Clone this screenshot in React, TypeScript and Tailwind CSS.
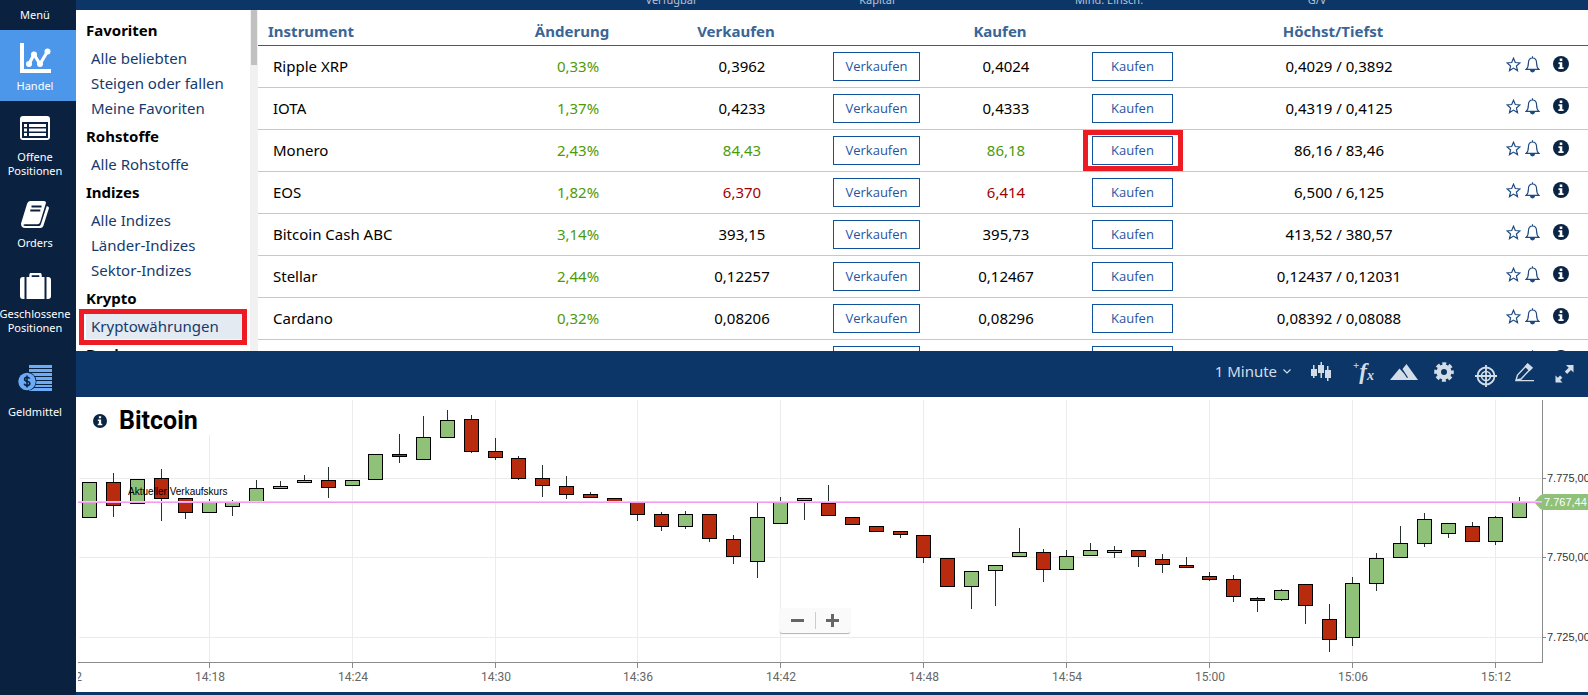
import type { ReactNode } from "react";

type Tone = "up" | "down" | "flat";

type Instrument = {
  name: string;
  change: string;
  sell: string;
  buy: string;
  range: string;
  tone: Tone;
  highlight?: boolean;
};

const INSTRUMENTS: Instrument[] = [
  { name: "Ripple XRP", change: "0,33%", sell: "0,3962", buy: "0,4024", range: "0,4029 / 0,3892", tone: "flat" },
  { name: "IOTA", change: "1,37%", sell: "0,4233", buy: "0,4333", range: "0,4319 / 0,4125", tone: "flat" },
  { name: "Monero", change: "2,43%", sell: "84,43", buy: "86,18", range: "86,16 / 83,46", tone: "up", highlight: true },
  { name: "EOS", change: "1,82%", sell: "6,370", buy: "6,414", range: "6,500 / 6,125", tone: "down" },
  { name: "Bitcoin Cash ABC", change: "3,14%", sell: "393,15", buy: "395,73", range: "413,52 / 380,57", tone: "flat" },
  { name: "Stellar", change: "2,44%", sell: "0,12257", buy: "0,12467", range: "0,12437 / 0,12031", tone: "flat" },
  { name: "Cardano", change: "0,32%", sell: "0,08206", buy: "0,08296", range: "0,08392 / 0,08088", tone: "flat" },
  { name: "", change: "", sell: "", buy: "", range: "", tone: "flat" },
];

const TONE_CLASS: Record<Tone, string> = {
  up: "text-[#4e9a06]",
  down: "text-[#a40000]",
  flat: "text-black",
};

const CATEGORIES: { title: string; items: string[] }[] = [
  { title: "Favoriten", items: ["Alle beliebten", "Steigen oder fallen", "Meine Favoriten"] },
  { title: "Rohstoffe", items: ["Alle Rohstoffe"] },
  { title: "Indizes", items: ["Alle Indizes", "Länder-Indizes", "Sektor-Indizes"] },
  { title: "Krypto", items: ["Kryptowährungen"] },
  { title: "Devisen", items: [] },
];

// [up, open/close top, open/close bottom, high, low]
const CANDLES: [number, number, number, number, number][] = [
  [1, 85, 121, 85, 121],
  [0, 85, 109, 76, 120],
  [1, 82, 107, 82, 107],
  [0, 81, 102, 72, 124],
  [0, 101, 116, 101, 122],
  [1, 104, 116, 102, 116],
  [1, 105, 110, 103, 119],
  [1, 91, 105, 83, 105],
  [1, 89, 92, 84, 92],
  [1, 83, 86, 78, 86],
  [0, 83, 91, 70, 101],
  [1, 83, 89, 83, 89],
  [1, 57, 83, 57, 83],
  [0, 57, 60, 37, 66],
  [1, 40, 63, 19, 63],
  [1, 23, 41, 13, 41],
  [0, 22, 55, 18, 56],
  [0, 54, 61, 41, 63],
  [0, 61, 82, 59, 83],
  [0, 81, 89, 68, 100],
  [0, 89, 98, 79, 102],
  [0, 97, 101, 95, 101],
  [0, 101, 105, 101, 105],
  [0, 105, 118, 105, 124],
  [0, 117, 130, 115, 134],
  [1, 117, 130, 114, 132],
  [0, 117, 142, 117, 145],
  [0, 142, 160, 138, 167],
  [1, 120, 165, 104, 181],
  [1, 104, 127, 100, 127],
  [1, 101, 104, 101, 123],
  [0, 106, 119, 88, 119],
  [0, 120, 128, 120, 128],
  [0, 129, 135, 129, 135],
  [0, 134, 138, 134, 141],
  [0, 138, 161, 138, 166],
  [0, 161, 190, 161, 190],
  [1, 174, 190, 174, 212],
  [1, 168, 174, 168, 209],
  [1, 155, 160, 131, 160],
  [0, 155, 173, 152, 185],
  [1, 159, 173, 153, 173],
  [1, 153, 159, 146, 159],
  [1, 153, 156, 149, 161],
  [0, 153, 160, 153, 170],
  [0, 162, 168, 157, 176],
  [0, 168, 171, 160, 171],
  [0, 179, 183, 175, 184],
  [0, 182, 200, 178, 205],
  [0, 201, 204, 200, 215],
  [1, 193, 203, 192, 204],
  [0, 187, 209, 187, 227],
  [0, 222, 243, 207, 255],
  [1, 186, 241, 180, 249],
  [1, 161, 187, 156, 194],
  [1, 146, 161, 129, 161],
  [1, 122, 147, 116, 150],
  [1, 126, 137, 126, 141],
  [0, 129, 145, 125, 145],
  [1, 120, 145, 119, 148],
  [1, 105, 121, 100, 121],
];

const TIMES = ["14:12", "14:18", "14:24", "14:30", "14:36", "14:42", "14:48", "14:54", "15:00", "15:06", "15:12"];

const PRICES = [
  { y: 81, label: "7.775,00" },
  { y: 160, label: "7.750,00" },
  { y: 240, label: "7.725,00" },
];

const candleLeft = (i: number) => Math.round(6.4 + i * 23.83);

function InfoIcon({ size }: { size: number }) {
  return (
    <svg width={size} height={size} viewBox="0 0 16 16" aria-hidden="true">
      <circle cx="8" cy="8" r="8" fill="#0a2445" />
      <path d="M6.7 2.6h2.6v2.3H6.7zM5.5 6.3h3.8v4.9h1.3v1.7H5.4v-1.7h1.3V8H5.5z" fill="#fff" />
    </svg>
  );
}

function StarIcon() {
  return (
    <svg width="15" height="15" viewBox="0 0 15 15" fill="none" stroke="#1f4a80" strokeWidth="1.2" aria-hidden="true">
      <path d="M7.5 1.2 9.3 5.5 14 5.9 10.4 9 11.5 13.6 7.5 11.1 3.5 13.6 4.6 9 1 5.9 5.7 5.5z" />
    </svg>
  );
}

function BellIcon() {
  return (
    <svg width="15" height="17" viewBox="0 0 15 17" fill="none" stroke="#1f4a80" strokeWidth="1.2" aria-hidden="true">
      <path d="M7.5 .3v1.5M1 13.4c1.7-1.3 2.4-2.6 2.4-6.2C3.4 4 5 2 7.5 2s4.1 2 4.1 5.2c0 3.6.7 4.9 2.4 6.2z" />
      <path d="M5.6 14h3.8a1.9 1.9 0 0 1-3.8 0z" fill="#1f4a80" />
    </svg>
  );
}

function TradeIcon() {
  return (
    <svg width="31" height="30" viewBox="0 0 31 30" fill="#fff" aria-hidden="true">
      <path d="M0 0h4v26h27v4H0z" />
      <path d="M9 21 14 11.5 20 21 27.5 8.5" fill="none" stroke="#fff" strokeWidth="3.2" />
      <circle cx="9" cy="21" r="3" />
      <circle cx="14" cy="11.5" r="3" />
      <circle cx="20" cy="21" r="3" />
      <circle cx="27.5" cy="8.5" r="3" />
    </svg>
  );
}

function ListIcon() {
  return (
    <svg width="30" height="24" viewBox="0 0 30 24" aria-hidden="true">
      <rect width="30" height="24" rx="3" fill="#fff" />
      <path d="M2 6h26v16H2z" fill="#0a2240" />
      <path d="M4 8h3v3H4zM9 8h17v3H9zM4 12.5h3v3H4zM9 12.5h17v3H9zM4 17h3v3H4zM9 17h17v3H9z" fill="#fff" />
    </svg>
  );
}

function BookIcon() {
  return (
    <svg width="28" height="27" viewBox="0 0 28 27" aria-hidden="true">
      <path d="M9.5 0H23q2.5 0 1.8 2.5L19 21.5q-.6 1.7-2.5 1.7H4q-1.8 0-1.5 1.1.2.8 1.8.8h13.5q1.5 0 2-1.5L25.8 5l1.5.8q.9.6.5 2L22.3 25q-.7 2-3 2H4.5Q0 27 0 22.5L6 3Q7 0 9.5 0z" fill="#fff" />
      <path d="M10.5 5.5h10M9.3 9.5h10" stroke="#0a2240" strokeWidth="1.8" />
    </svg>
  );
}

function SuitcaseIcon() {
  return (
    <svg width="31" height="26" viewBox="0 0 31 26" aria-hidden="true">
      <path d="M10.5 5V2q0-1 1-1h8q1 0 1 1v3" fill="none" stroke="#fff" strokeWidth="2.4" />
      <path d="M6.5 4h18v22h-18zM4.5 4v22H3q-3 0-3-3V7q0-3 3-3zM26.5 4v22H28q3 0 3-3V7q0-3-3-3z" fill="#fff" />
    </svg>
  );
}

function FundsIcon() {
  return (
    <svg width="34" height="26" viewBox="0 0 34 26" aria-hidden="true">
      <path d="M11 0h23v3H11zM11 4h23v3H11zM11 8h23v3H11zM11 12h23v3H11zM11 16h23v3H11zM11 20h23v2H11zM11 23h23v3H11z" fill="#6cabf5" />
      <circle cx="9" cy="16.5" r="9.5" fill="#0a2240" />
      <circle cx="9" cy="16.5" r="8.7" fill="#6cabf5" />
      <path d="M11.6 13.8q-.6-1.5-2.6-1.5-2.4 0-2.4 1.9 0 1.6 2.4 2.1 2.8.5 2.8 2.3 0 2-2.8 2-2.3 0-2.8-1.8M9 10.5v12" fill="none" stroke="#0a2240" strokeWidth="1.6" />
    </svg>
  );
}

function NavItem({ icon, lines, className }: { icon: ReactNode; lines: string[]; className: string }) {
  return (
    <button type="button" className={`flex w-full flex-col items-center pr-1.5 text-[11px] leading-[14px] text-white ${className}`}>
      {icon}
      {lines.map((line) => (
        <span key={line}>{line}</span>
      ))}
    </button>
  );
}

function Sidebar() {
  return (
    <nav className="flex w-[76px] shrink-0 flex-col bg-[#0a2240]">
      <button type="button" className="h-[30px] w-full pr-1.5 text-[11px] text-white">
        Menü
      </button>
      <NavItem icon={<TradeIcon />} lines={["Handel"]} className="h-[71px] bg-[#4d97ea] pt-[13px] [&>svg]:mb-1.5" />
      <NavItem icon={<ListIcon />} lines={["Offene", "Positionen"]} className="h-[84px] pt-[15px] [&>svg]:mb-2.5" />
      <NavItem icon={<BookIcon />} lines={["Orders"]} className="h-[72px] pt-4 [&>svg]:mb-2" />
      <NavItem icon={<SuitcaseIcon />} lines={["Geschlossene", "Positionen"]} className="h-[92px] pt-4 [&>svg]:mb-2" />
      <NavItem icon={<FundsIcon />} lines={["Geldmittel"]} className="h-[80px] pt-4 [&>svg]:mb-3.5" />
    </nav>
  );
}

function AccountBar() {
  return (
    <div className="flex h-[10px] items-end justify-end overflow-hidden bg-[#0c3668] pr-[193px] pb-0.5 text-center text-[11px] leading-[16px] text-[#b4c2d3]">
      <span className="w-[207px]">Verfügbar</span>
      <span className="w-[204px]">Kapital</span>
      <span className="w-[260px]">Mind. Einsch.</span>
      <span className="w-[156px]">G/V</span>
    </div>
  );
}

function Categories() {
  return (
    <aside className="flex w-[182px] shrink-0 bg-white">
      <div className="flex-1 pt-[5px] pr-2 pl-[10px]">
        {CATEGORIES.map((group) => (
          <section key={group.title}>
            <h2 className="h-[31px] text-[15px] leading-[31px] font-bold text-black">{group.title}</h2>
            <ul>
              {group.items.map((item) => {
                const active = item === "Kryptowährungen";
                return (
                  <li key={item} className="relative">
                    <a
                      href="#"
                      className={`block h-[25px] pl-[5px] text-[15px] leading-[24px] whitespace-nowrap text-[#163a6b] ${active ? "bg-[#e3eaf2]" : ""}`}
                    >
                      {item}
                    </a>
                    {active && (
                      <span className="pointer-events-none absolute -top-[5px] -right-[5px] -bottom-[6px] -left-[7px] border-5 border-[#ed1c24]" />
                    )}
                  </li>
                );
              })}
            </ul>
          </section>
        ))}
      </div>
      <div className="w-2 bg-[#f1f1f1] px-px">
        <div className="h-[55px] bg-[#c1c1c1]" />
      </div>
    </aside>
  );
}

function InstrumentTable() {
  return (
    <div className="min-w-0 flex-1 bg-white">
      <table className="w-full table-fixed border-collapse text-center text-[15px]">
        <colgroup>
          <col />
          <col className="w-[164px]" />
          <col className="w-[164px]" />
          <col className="w-[105px]" />
          <col className="w-[154px]" />
          <col className="w-[99px]" />
          <col className="w-[314px]" />
          <col className="w-[92px]" />
        </colgroup>
        <thead>
          <tr className="h-[35px] border-b border-[#2f6096] text-[#3a6596]">
            <th className="pt-2 pl-[10px] text-left">Instrument</th>
            <th className="pt-2 pr-3">Änderung</th>
            <th className="pt-2 pr-3">Verkaufen</th>
            <th />
            <th className="pt-2 pr-3">Kaufen</th>
            <th />
            <th className="pt-2 pr-3">Höchst/Tiefst</th>
            <th />
          </tr>
        </thead>
        <tbody>
          {INSTRUMENTS.map((row) => (
            <tr key={row.name} className="h-[42px] border-b border-[#c8c8c8]">
              <td className="pl-[15px] text-left">{row.name}</td>
              <td className="text-[#4e9a06]">{row.change}</td>
              <td className={TONE_CLASS[row.tone]}>{row.sell}</td>
              <td>
                <button
                  type="button"
                  className="h-[29px] w-[87px] border border-[#11529c] pt-px align-middle font-['Open_Sans','Noto_Sans',sans-serif] text-[13px] text-[#1f55a0]"
                >
                  Verkaufen
                </button>
              </td>
              <td className={TONE_CLASS[row.tone]}>{row.buy}</td>
              <td>
                <div className="relative mx-auto w-[81px]">
                  <button
                    type="button"
                    className="block h-[29px] w-full border border-[#11529c] pt-px font-['Open_Sans','Noto_Sans',sans-serif] text-[13px] text-[#1f55a0]"
                  >
                    Kaufen
                  </button>
                  {row.highlight && <span className="pointer-events-none absolute -inset-y-[6px] -right-[10px] -left-[9px] border-5 border-[#ed1c24]" />}
                </div>
              </td>
              <td>{row.range}</td>
              <td>
                <div className="flex items-center pb-1 pl-[10px]">
                  <button type="button" aria-label="Favorit">
                    <StarIcon />
                  </button>
                  <button type="button" aria-label="Alarm" className="ml-1">
                    <BellIcon />
                  </button>
                  <button type="button" aria-label="Info" className="ml-[13px]">
                    <InfoIcon size={16} />
                  </button>
                </div>
              </td>
            </tr>
          ))}
        </tbody>
      </table>
    </div>
  );
}

function ChartToolbar() {
  return (
    <div className="flex h-[46px] shrink-0 items-center justify-end bg-[#0c3668] pr-[14px] pb-1 text-[#d3dde7]">
      <button type="button" className="mr-5 flex items-center gap-1.5 pb-0.5 text-[15px]">
        1 Minute
        <svg width="8" height="5" viewBox="0 0 8 5" fill="none" stroke="currentColor" strokeWidth="1.2" aria-hidden="true">
          <path d="M.5.5 4 4 7.5.5" />
        </svg>
      </button>
      <button type="button" aria-label="Charttyp" className="mr-[21px]">
        <svg width="21" height="20" viewBox="0 0 21 20" fill="currentColor" aria-hidden="true">
          <path d="M0 7h2V3h1.5v4H6v7H3.5v2H2v-2H0zM7 3h2.5V0H11v3h2v8h-2v5H9.5v-5H7zM14 8h2V4h1.5v4H20v8h-2.5v3H16v-3h-2z" />
        </svg>
      </button>
      <button type="button" aria-label="Indikatoren" className="mr-4 flex h-[22px] font-['Liberation_Serif',serif] leading-[22px] font-bold italic">
        <span className="self-start text-[11px] leading-[8px] not-italic">+</span>
        <span className="text-[23px]">f</span>
        <span className="self-end text-[14px] leading-[14px]">x</span>
      </button>
      <button type="button" aria-label="Fläche" className="mr-4">
        <svg width="28" height="16" viewBox="0 0 28 16" fill="currentColor" aria-hidden="true">
          <path d="M0 16 9.5 4.5 14 9.5 17 14 18 13.5 12.5 5 16.5 0 28 16z" />
        </svg>
      </button>
      <button type="button" aria-label="Einstellungen" className="mr-[21px]">
        <svg width="20" height="20" viewBox="0 0 20 20" aria-hidden="true">
          <g fill="none" stroke="currentColor">
            <circle cx="10" cy="10" r="5.3" strokeWidth="4.6" />
            <circle cx="10" cy="10" r="8.3" strokeWidth="3" strokeDasharray="3.9 2.618" strokeDashoffset="1.95" />
          </g>
        </svg>
      </button>
      <button type="button" aria-label="Fadenkreuz" className="mr-[18px] pt-2">
        <svg width="22" height="22" viewBox="0 0 22 22" fill="none" stroke="currentColor" strokeWidth="1.8" aria-hidden="true">
          <circle cx="11" cy="11" r="8.5" />
          <circle cx="11" cy="11" r="4.5" strokeWidth="1.6" />
          <path d="M11 0v22M0 11h22" />
        </svg>
      </button>
      <button type="button" aria-label="Zeichnen" className="mr-[20px]">
        <svg width="20" height="19" viewBox="0 0 20 19" fill="none" stroke="currentColor" strokeWidth="1.4" aria-hidden="true">
          <path d="M1 17.3 2.5 12 12.5 1.5 16.5 5 6 16zM1 17.6h18" />
          <path d="M10.5 3.5 12.7 1 17 4.7 14.5 7.2z" fill="currentColor" />
        </svg>
      </button>
      <button type="button" aria-label="Vollbild" className="pt-1">
        <svg width="19" height="18" viewBox="0 0 19 18" fill="currentColor" aria-hidden="true">
          <path d="M11 0h7.5v7.5L16 5l-3.900 3.900-2.300-2.300 3.900-3.900zM7.5 17.5h-7v-7l2.300 2.300 2.300-2.300 2.300 2.300-2.300 2.300z" />
        </svg>
      </button>
    </div>
  );
}

function Chart() {
  return (
    <div className="relative bg-white">
      <svg viewBox="0 0 1512 295" className="block w-full" role="img" aria-label="Bitcoin Kursverlauf">
        <defs>
          <clipPath id="plot">
            <rect x="2" y="0" width="1510" height="295" />
          </clipPath>
        </defs>
        <g clipPath="url(#plot)">
          <g fill="#ececec">
            {PRICES.map((p) => (
              <rect key={p.label} x="3" y={p.y} width="1463" height="1" />
            ))}
            {TIMES.slice(1).map((t, i) => (
              <rect key={t} x={candleLeft(i * 6 + 5) + 7} y="3" width="1" height="262" />
            ))}
          </g>
          {CANDLES.map(([up, top, bottom, high, low], i) => {
            const x = candleLeft(i);
            return (
              <g key={i}>
                <rect x={x + 7} y={high} width="1" height={low - high} fill="#26322f" />
                <rect x={x + 0.5} y={top + 0.5} width="14" height={bottom - top - 1} fill={up ? "#8fc179" : "#b92b0e"} stroke="#000" />
              </g>
            );
          })}
          <text x="52" y="98" className="font-['Liberation_Sans',Arial,sans-serif] text-[10px]" fill="#000">
            Aktueller Verkaufskurs
          </text>
          <g fill="#8a8a8a">
            <rect x="2" y="265" width="1465" height="1" />
            <rect x="1466" y="3" width="1" height="263" />
            {PRICES.map((p) => (
              <rect key={p.label} x="1467" y={p.y} width="3" height="1" />
            ))}
            {TIMES.slice(1).map((t, i) => (
              <rect key={t} x={candleLeft(i * 6 + 5) + 7} y="266" width="1" height="5" />
            ))}
          </g>
          <g className="font-['Roboto',sans-serif] text-[12px]" fill="#666" textAnchor="middle">
            {TIMES.map((t, i) => (
              <text key={t} x={candleLeft(i * 6 - 1) + 8} y="284">
                {t}
              </text>
            ))}
          </g>
          <g className="font-['Liberation_Sans',Arial,sans-serif] text-[11px]" fill="#333">
            {PRICES.map((p) => (
              <text key={p.label} x="1471" y={p.y + 4}>
                {p.label}
              </text>
            ))}
          </g>
          <path d="M1458 105 1464 98.5Q1466 97 1468 97H1512V113H1468Q1466 113 1464 111.5z" fill="#8fc179" />
          <text x="1468" y="109" className="font-['Liberation_Sans',Arial,sans-serif] text-[11px]" fill="#fff">
            7.767,44
          </text>
          <rect x="2" y="104" width="1464" height="1" fill="#f7c6f6" />
          <rect x="2" y="105" width="1464" height="1" fill="#f29af0" />
        </g>
      </svg>
      <div className="absolute top-0 left-[11px] flex h-[38px] items-center gap-3 bg-white pt-2.5 pr-6 pl-1.5">
        <button type="button" aria-label="Info">
          <InfoIcon size={14} />
        </button>
        <h1 className="font-['Roboto',sans-serif] text-[25px] leading-[30px] font-bold text-black">Bitcoin</h1>
      </div>
      <div className="absolute bottom-[59px] left-[704px] flex h-[25px] w-[70px] items-center rounded-xs bg-[#fafafa] shadow-[0_1px_1px_rgba(0,0,0,0.3)]">
        <button type="button" aria-label="Verkleinern" className="flex h-full flex-1 items-center justify-center">
          <span className="h-[3px] w-[13px] bg-[#666]" />
        </button>
        <span className="h-[17px] w-px bg-[#ccc]" />
        <button type="button" aria-label="Vergrößern" className="flex h-full flex-1 items-center justify-center">
          <svg width="13" height="13" viewBox="0 0 13 13" fill="#666" aria-hidden="true">
            <path d="M5 0h3v5h5v3H8v5H5V8H0V5h5z" />
          </svg>
        </button>
      </div>
    </div>
  );
}

export default function App() {
  return (
    <div className="flex min-h-screen bg-[#0c3668] font-['Noto_Sans',sans-serif]">
      <Sidebar />
      <main className="flex min-w-0 flex-1 flex-col">
        <AccountBar />
        <div className="flex h-[341px] overflow-hidden">
          <Categories />
          <InstrumentTable />
        </div>
        <ChartToolbar />
        <Chart />
      </main>
    </div>
  );
}
